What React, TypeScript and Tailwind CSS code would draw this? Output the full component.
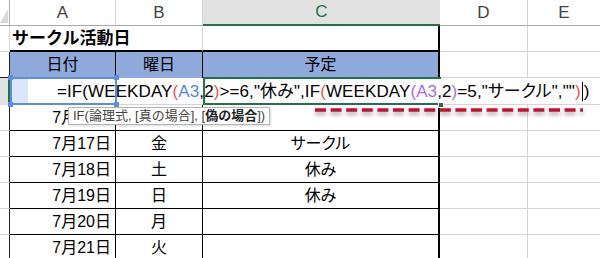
import React from 'react'

const jp = "font-['Liberation_Sans','Noto_Sans_CJK_JP',sans-serif]"
const g = 'border-[#d4d4d4]'

interface DayRow {
  date: string
  day: string
  plan: string
}

const days: DayRow[] = [
  { date: '7月16日', day: '木', plan: '' },
  { date: '7月17日', day: '金', plan: 'サークル' },
  { date: '7月18日', day: '土', plan: '休み' },
  { date: '7月19日', day: '日', plan: '休み' },
  { date: '7月20日', day: '月', plan: '' },
  { date: '7月21日', day: '火', plan: '' },
]

const Red = ({ children }: { children: React.ReactNode }) => <span className="text-[#f0524f]">{children}</span>
const Blue = ({ children }: { children: React.ReactNode }) => <span className="text-[#4f86e6]">{children}</span>
const Purple = ({ children }: { children: React.ReactNode }) => <span className="text-[#a76fd9]">{children}</span>

export default function App() {
  return (
    <div className={`relative w-[600px] h-[258px] overflow-hidden bg-white text-black ${jp}`}>
      {/* column headers */}
      <div className="flex h-[26px]">
        <div className="relative w-[10px] border-r border-b border-[#ababab] bg-white">
          <svg className="absolute left-0 bottom-[2px]" width="9" height="14" viewBox="0 0 9 14">
            <polygon points="8,0 8,14 0,14" fill="#d9d9d9" />
          </svg>
        </div>
        <div className={`w-[106px] flex items-center justify-center border-r border-b ${g} border-b-[#ababab] text-[17px] text-[#444]`}>A</div>
        <div className={`w-[87px] flex items-center justify-center border-r border-b ${g} border-b-[#ababab] text-[17px] text-[#444]`}>B</div>
        <div className="w-[237px] flex items-center justify-center bg-[#e1e1e1] border-b-2 border-[#217346] text-[17px] text-[#217346]">C</div>
        <div className={`w-[88px] flex items-center justify-center border-r border-b ${g} border-b-[#ababab] text-[17px] text-[#444]`}>D</div>
        <div className={`w-[72px] flex items-center justify-center border-b ${g} border-b-[#ababab] text-[17px] text-[#444]`}>E</div>
      </div>

      {/* row 1: title */}
      <div className="flex h-[26px]">
        <div className={`w-[10px] border-r border-b ${g}`} />
        <div className="relative w-[106px] border-b-2 border-black">
          <span className="absolute left-[2px] top-[1px] whitespace-nowrap text-[17px] font-bold leading-[24px]">サークル活動日</span>
        </div>
        <div className={`w-[87px] border-r ${g} border-b-2 border-b-black`} />
        <div className="w-[237px] border-b-2 border-black border-r-2" />
        <div className={`w-[88px] border-r border-b ${g}`} />
        <div className={`w-[72px] border-b ${g}`} />
      </div>

      {/* row 2: table header */}
      <div className="flex h-[26px]">
        <div className="w-[10px] border-r border-b border-[#222]" />
        <div className="w-[106px] flex items-center justify-center bg-[#8eaadb] border-r border-black text-[16px]">日付</div>
        <div className="w-[87px] flex items-center justify-center bg-[#8eaadb] border-r border-black text-[16px]">曜日</div>
        <div className="w-[237px] flex items-center justify-center bg-[#8eaadb] border-r-2 border-black text-[16px]">予定</div>
        <div className={`w-[88px] border-r border-b ${g}`} />
        <div className={`w-[72px] border-b ${g}`} />
      </div>

      {/* row 3: editing row */}
      <div className="flex h-[27px]">
        <div className="w-[10px] bg-[#e1e1e1] border-r-2 border-[#217346]" />
        <div className="w-[590px] bg-white border-b border-[#d4d4d4]" />
      </div>

      {/* data rows */}
      {days.map((d, i) => (
        <div key={i} className="flex h-[26px]">
          <div className={`w-[10px] border-r border-[#222] border-b border-b-[#d4d4d4]`} />
          <div className="w-[106px] flex items-center justify-end pr-[4px] border-r border-b border-black text-[16px]">{d.date}</div>
          <div className="w-[87px] flex items-center justify-center border-r border-b border-black text-[16px]">{d.day}</div>
          <div className="w-[237px] flex items-center justify-center border-r-2 border-b border-black text-[16px] [font-feature-settings:'palt']">{d.plan}</div>
          <div className={`w-[88px] border-r border-b ${g}`} />
          <div className={`w-[72px] border-b ${g}`} />
        </div>
      ))}

      {/* reference range A3 */}
      <div className="absolute left-[12px] top-[79px] w-[16px] h-[24px] bg-[#dde6f8]" />
      <div className="absolute left-[10px] top-[77px] w-[107px] h-[28px] border-2 border-[#5b8ee6]" />
      <div className="absolute left-[8px] top-[75px] w-[5px] h-[5px] bg-[#5b8ee6]" />
      <div className="absolute left-[114px] top-[75px] w-[5px] h-[5px] bg-[#5b8ee6]" />
      <div className="absolute left-[8px] top-[102px] w-[5px] h-[5px] bg-[#5b8ee6]" />
      <div className="absolute left-[114px] top-[102px] w-[5px] h-[5px] bg-[#5b8ee6]" />

      {/* active cell C3 */}
      <div className="absolute left-[203px] top-[77px] w-[238px] h-[2px] bg-[#217346]" />
      <div className="absolute left-[203px] top-[103px] w-[238px] h-[2px] bg-[#217346]" />
      <div className="absolute left-[203px] top-[77px] w-[2px] h-[28px] bg-[#217346]" />
      <div className="absolute left-[438px] top-[102px] w-[6px] h-[6px] bg-[#217346] border border-white" />

      {/* in-cell editor text */}
      <div className="absolute left-0 top-[78px] h-[27px] w-[600px] flex items-center pl-[57px] whitespace-nowrap text-[17px] tracking-[0.1px] [font-feature-settings:'palt']">
        <span>=IF(WEEKDAY</span>
        <Red>(</Red>
        <Blue>A3</Blue>
        <span>,2</span>
        <Red>)</Red>
        <span>&gt;=6,"休み",IF</span>
        <Red>(</Red>
        <span>WEEKDAY</span>
        <Purple>(</Purple>
        <Purple>A3</Purple>
        <span>,2</span>
        <Purple>)</Purple>
        <span>=5,"サークル",""</span>
        <Red>)</Red>
        <span className="inline-block w-px h-[19px] bg-black mx-[1px]" />
        <span>)</span>
      </div>

      {/* function tooltip */}
      <div className="absolute left-[68px] top-[107px] h-[18px] px-[4px] flex items-center bg-white border border-[#b4b4b4] text-[13px] text-[#444] whitespace-nowrap shadow-[1px_1px_2px_rgba(0,0,0,0.15)]">
        IF(論理式, [真の場合], [<b className="text-[#222]">偽の場合</b>])
      </div>

      {/* red dashed annotation */}
      <svg className="absolute left-[313px] top-[106px] drop-shadow-[0_3px_2px_rgba(0,0,0,0.35)]" width="272" height="10" viewBox="0 0 272 10">
        <line x1="2" y1="4" x2="270" y2="4" stroke="#c8102e" strokeWidth="3.5" strokeDasharray="11 4.6" />
      </svg>
    </div>
  )
}
